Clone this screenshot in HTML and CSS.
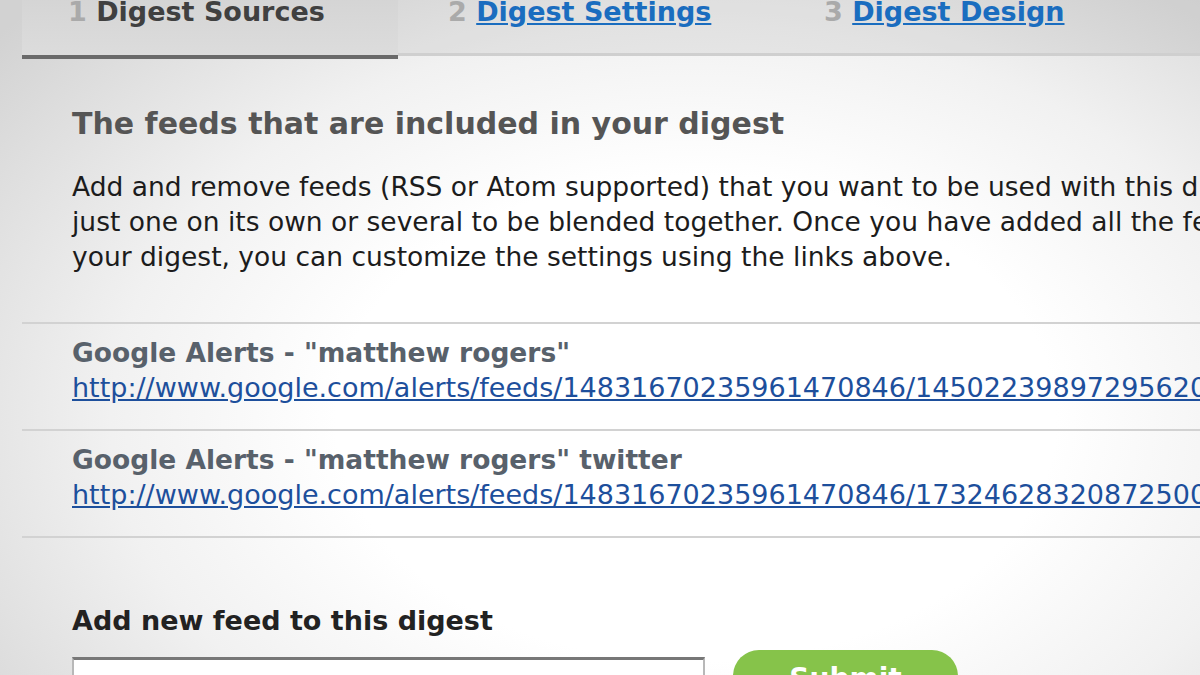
FILE: index.html
```html
<!DOCTYPE html>
<html lang="en">

<head>
    <meta charset="UTF-8">
    <meta name="viewport" content="width=device-width, initial-scale=1.0">
    <title>Digest Sources</title>
    <link rel="stylesheet" href="styles.css">
</head>

<body>
    <div class="page">
        <ul class="tabs">
            <li class="tab active"><span class="num">1</span> Digest Sources</li>
            <li class="tab"><span class="num">2</span> <a href="#">Digest Settings</a></li>
            <li class="tab"><span class="num">3</span> <a href="#">Digest Design</a></li>
        </ul>

        <div class="intro">
            <h2>The feeds that are included in your digest</h2>
            <p>Add and remove feeds (RSS or Atom supported) that you want to be used with this digest. You can use<br>
                just one on its own or several to be blended together. Once you have added all the feeds you want in<br>
                your digest, you can customize the settings using the links above.</p>
        </div>

        <ul class="feeds">
            <li class="feed">
                <div class="feed-title">Google Alerts - "matthew rogers"</div>
                <a class="feed-url" href="#">http://www.google.com/alerts/feeds/14831670235961470846/14502239897295620583</a>
            </li>
            <li class="feed">
                <div class="feed-title">Google Alerts - "matthew rogers" twitter</div>
                <a class="feed-url" href="#">http://www.google.com/alerts/feeds/14831670235961470846/17324628320872500219</a>
            </li>
        </ul>

        <form class="add-feed" onsubmit="return false">
            <label for="feed-url">Add new feed to this digest</label>
            <div class="add-row">
                <input id="feed-url" type="text">
                <button type="submit">Submit</button>
            </div>
        </form>
    </div>
</body>

</html>
```

FILE: styles.css
```css
:root {
    --text-color: #1c1c1c;
    --heading-color: #555555;
    --feed-title-color: #58616b;
    --link-color: #1d4f9c;
    --tab-link-color: #1a6dbf;
    --rule-color: #d2d2d2;
    --green: #86c34a;
}

html,
body {
    height: 100%;
}

body {
    margin: 0;
    overflow: hidden;
    background: radial-gradient(ellipse 75% 90% at 58% 62%, #ffffff 40%, #f1f1f1 65%, #d2d2d2 100%);
    color: var(--text-color);
    font-family: "DejaVu Sans", Verdana, sans-serif;
}

.page {
    padding-left: 22px;
    white-space: nowrap;
}

/* Tabs */
.tabs {
    display: flex;
    list-style: none;
    margin: -13px 0 0;
    padding: 0;
    background: rgba(0, 0, 0, 0.06);
    border-bottom: 3px solid #cfcfcf;
}

.tab {
    width: 376px;
    flex-shrink: 0;
    box-sizing: border-box;
    padding: 8px 0 24px 50px;
    font-weight: bold;
    font-size: 27px;
    line-height: 34px;
    color: #404040;
}

.tab.active {
    padding-left: 46px;
    background: linear-gradient(#d3d3d3, #dcdcdc);
    border-bottom: 4px solid #6a6a6a;
    margin-bottom: -6px;
}

.tab .num {
    color: #aaaaaa;
}

.tab a {
    color: var(--tab-link-color);
}

/* Intro */
.intro {
    padding: 48px 0 0 50px;
}

.intro h2 {
    margin: 0;
    font-size: 30px;
    line-height: 40px;
    color: var(--heading-color);
}

.intro p {
    margin: 25px 0 0;
    font-size: 26.5px;
    line-height: 35px;
}

/* Feeds */
.feeds {
    list-style: none;
    margin: 48px 0 0;
    padding: 0;
    border-top: 2px solid var(--rule-color);
}

.feed {
    height: 107px;
    box-sizing: border-box;
    padding: 12px 0 0 50px;
    border-bottom: 2px solid var(--rule-color);
}

.feed-title {
    font-weight: bold;
    font-size: 26.5px;
    line-height: 34px;
    color: var(--feed-title-color);
}

.feed-url {
    display: block;
    font-size: 27px;
    line-height: 35px;
    color: var(--link-color);
}

/* Add feed form */
.add-feed {
    padding: 66px 0 0 50px;
}

.add-feed label {
    display: block;
    font-weight: bold;
    font-size: 27px;
    line-height: 34px;
    color: #222222;
}

.add-row {
    display: flex;
    align-items: flex-start;
    gap: 28px;
    margin-top: 12px;
}

.add-row input {
    width: 633px;
    height: 50px;
    box-sizing: border-box;
    margin-top: 7px;
    border: 2px solid #b8b8b8;
    border-top: 3px solid #777777;
    background: #ffffff;
}

.add-row button {
    width: 225px;
    height: 56px;
    border: none;
    border-radius: 26px;
    background: var(--green);
    color: #ffffff;
    font-family: "DejaVu Sans", sans-serif;
    font-weight: bold;
    font-size: 28px;
    padding: 0;
    cursor: pointer;
}
```
